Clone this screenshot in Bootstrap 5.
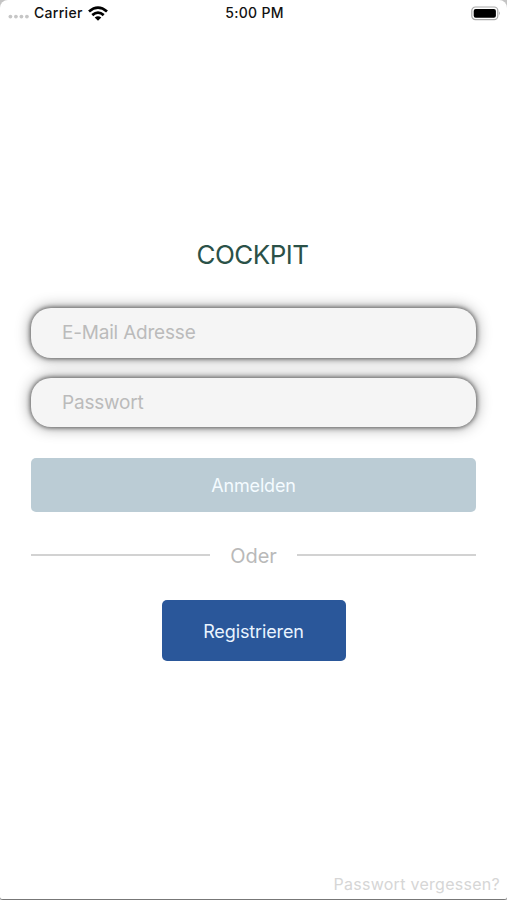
<!DOCTYPE html>
<html lang="de">
<head>
<meta charset="utf-8">
<meta name="viewport" content="width=device-width, initial-scale=1">
<title>Cockpit</title>
<link href="https://cdn.jsdelivr.net/npm/bootstrap@5.3.0/dist/css/bootstrap.min.css" rel="stylesheet">
<style>
body { font-family: Inter, "Liberation Sans", sans-serif; background: #c4c4c4; }
.screen { height: 900px; background: #fff; border-bottom: 1px solid #777; border-radius: 8px 8px 3px 3px; }
.status-bar { height: 26px; padding: 0 6px 0 8px; font-size: 14px; font-weight: 500; line-height: 26px; color: #111; letter-spacing: .3px; }
.status-bar > * { flex: 1 1 0; }
.signal { margin-right: 4px; }
.carrier { margin-right: 5px; }
.login { padding: 212px 31px 0; }
.app-title { font-size: 26px; line-height: 34px; font-weight: 400; color: #2b5148; letter-spacing: -.5px; margin: 0 2px 36px 0; }
.field { height: 50px; border: 0; border-radius: 20px; background: #f5f5f5; padding: 0 31px 2px; font-size: 19px; letter-spacing: -.2px; box-shadow: 0 0 4px 1px rgba(0,0,0,.5), 0 0 15px rgba(0,0,0,.42); }
.field::placeholder { color: #bbb; opacity: 1; }
.field-pass { height: 49px; margin-top: 19.5px; padding: 1px 31px 0; }
.btn-login { height: 54px; margin-top: 31.5px; border: 0; border-radius: 5px; background: #bbccd5; color: #f4fbff; font-size: 18px; letter-spacing: -.17px; }
.divider { margin-top: 29px; height: 30px; gap: 20px; font-size: 20px; color: #b9b9b9; }
.rule { height: 2px; background: #d2d2d2; margin-bottom: 2px; }
.btn-register { width: 184px; height: 61px; margin-top: 29px; padding-top: 7px; border: 0; border-radius: 5px; background: #2a579a; color: #e9f4ff; font-size: 18px; letter-spacing: -.12px; }
.forgot { font-size: 16px; line-height: 20px; letter-spacing: .28px; color: #d6d6d6; padding: 0 7px 5px 0; }
</style>
<script src="https://cdn.jsdelivr.net/npm/bootstrap@5.3.0/dist/js/bootstrap.bundle.min.js"></script>
</head>
<body>
<div class="screen d-flex flex-column">
  <header class="status-bar d-flex align-items-center">
    <div class="d-flex align-items-center">
      <svg class="signal" width="22" height="12" viewBox="0 0 22 12" fill="#c6c6c6"><circle cx="2.4" cy="9.6" r="1.9"/><circle cx="7.9" cy="9.6" r="1.9"/><circle cx="13.4" cy="9.6" r="1.9"/><circle cx="18.9" cy="9.6" r="1.9"/></svg>
      <span class="carrier">Carrier</span>
      <svg width="20" height="15" viewBox="0 0 20 15" fill="none" stroke="#000" stroke-width="2.8"><path d="M1 5.5Q10-2.2 19 5.5"/><path d="M4.3 9.1Q10 4.2 15.7 9.1"/><path d="M10 14.8L6.7 11.6Q10 8.9 13.3 11.6Z" fill="#000" stroke="none"/></svg>
    </div>
    <div class="text-center">5:00 PM</div>
    <div class="d-flex justify-content-end">
      <svg width="30" height="15" viewBox="0 0 30 15"><rect x=".8" y="1" width="26" height="12.6" rx="3.6" fill="#fff" stroke="#aaa" stroke-width="1.2"/><rect x="2.7" y="2.9" width="22.2" height="8.8" rx="2" fill="#000"/><path d="M28.2 5.2q1.7 2.1 0 4.2z" fill="#999"/></svg>
    </div>
  </header>
  <main class="login">
    <h1 class="app-title text-center">COCKPIT</h1>
    <form class="d-flex flex-column">
      <input class="field form-control" type="email" placeholder="E-Mail Adresse" aria-label="E-Mail Adresse">
      <input class="field field-pass form-control" type="password" placeholder="Passwort" aria-label="Passwort">
      <button class="btn btn-login w-100" type="button">Anmelden</button>
      <div class="divider d-flex align-items-center"><div class="rule flex-fill"></div><span>Oder</span><div class="rule flex-fill"></div></div>
      <button class="btn btn-register align-self-center" type="button">Registrieren</button>
    </form>
  </main>
  <footer class="forgot text-end mt-auto">Passwort vergessen?</footer>
</div>
</body>
</html>
